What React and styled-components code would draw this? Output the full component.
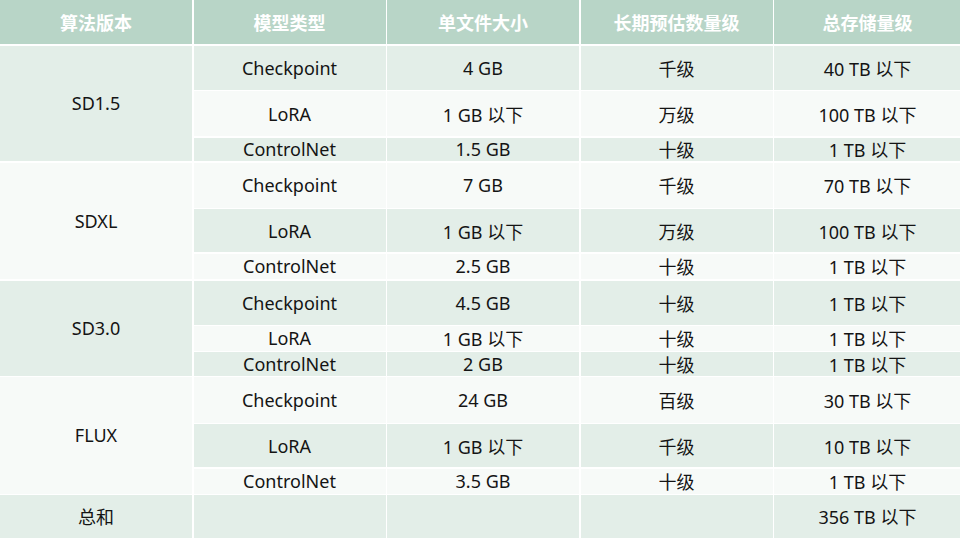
import React from "react";
import styled, { createGlobalStyle } from "styled-components";

const Global = createGlobalStyle`
  html, body { margin: 0; padding: 0; background: #ffffff; }
  body { width: 960px; height: 540px; overflow: hidden; }
`;

const Grid = styled.div`
  display: grid;
  width: 961px;
  grid-template-columns: 192px 192px 192px 192px 1fr;
  grid-template-rows: 44px 44px 45px 23.5px 45px 43px 25.5px 44px 24.5px 23.5px 45.5px 43px 25px 42.5px;
  gap: 1.5px;
  background: #ffffff;
  font-family: "Noto Sans", "Noto Sans CJK SC", sans-serif;
  font-size: 18px;
  color: #141414;
`;

const HeadCell = styled.div`
  display: flex;
  align-items: center;
  justify-content: center;
  background: #b8d5c7;
  color: #ffffff;
  font-weight: 700;
  font-family: "Noto Sans CJK SC", "Noto Sans", sans-serif;
`;

const Cell = styled.div`
  display: flex;
  align-items: center;
  justify-content: center;
  white-space: nowrap;
  background: ${(p) => (p.$tone === "green" ? "#e3eee8" : "#f7faf8")};
  grid-row: ${(p) => p.$row} / span ${(p) => p.$span || 1};
  grid-column: ${(p) => p.$col};
`;

const headers = ["算法版本", "模型类型", "单文件大小", "长期预估数量级", "总存储量级"];

const groups = [
  {
    name: "SD1.5",
    tone: "green",
    rows: [
      ["Checkpoint", "4 GB", "千级", "40 TB 以下"],
      ["LoRA", "1 GB 以下", "万级", "100 TB 以下"],
      ["ControlNet", "1.5 GB", "十级", "1 TB 以下"],
    ],
  },
  {
    name: "SDXL",
    tone: "white",
    rows: [
      ["Checkpoint", "7 GB", "千级", "70 TB 以下"],
      ["LoRA", "1 GB 以下", "万级", "100 TB 以下"],
      ["ControlNet", "2.5 GB", "十级", "1 TB 以下"],
    ],
  },
  {
    name: "SD3.0",
    tone: "green",
    rows: [
      ["Checkpoint", "4.5 GB", "十级", "1 TB 以下"],
      ["LoRA", "1 GB 以下", "十级", "1 TB 以下"],
      ["ControlNet", "2 GB", "十级", "1 TB 以下"],
    ],
  },
  {
    name: "FLUX",
    tone: "white",
    rows: [
      ["Checkpoint", "24 GB", "百级", "30 TB 以下"],
      ["LoRA", "1 GB 以下", "千级", "10 TB 以下"],
      ["ControlNet", "3.5 GB", "十级", "1 TB 以下"],
    ],
  },
];

const flip = (t) => (t === "green" ? "white" : "green");

export default function App() {
  const cells = [];
  groups.forEach((g, gi) => {
    const start = 2 + gi * 3;
    cells.push(
      <Cell key={`g${gi}`} $row={start} $span={3} $col={1} $tone={g.tone}>
        {g.name}
      </Cell>
    );
    g.rows.forEach((r, ri) => {
      const tone = ri === 1 ? flip(g.tone) : g.tone;
      r.forEach((v, ci) => {
        cells.push(
          <Cell key={`c${gi}-${ri}-${ci}`} $row={start + ri} $col={ci + 2} $tone={tone}>
            {v}
          </Cell>
        );
      });
    });
  });
  return (
    <>
      <Global />
      <Grid>
        {headers.map((h) => (
          <HeadCell key={h}>{h}</HeadCell>
        ))}
        {cells}
        <Cell $row={14} $col={1} $tone="green">总和</Cell>
        <Cell $row={14} $col={2} $tone="green" />
        <Cell $row={14} $col={3} $tone="green" />
        <Cell $row={14} $col={4} $tone="green" />
        <Cell $row={14} $col={5} $tone="green">356 TB 以下</Cell>
      </Grid>
    </>
  );
}
